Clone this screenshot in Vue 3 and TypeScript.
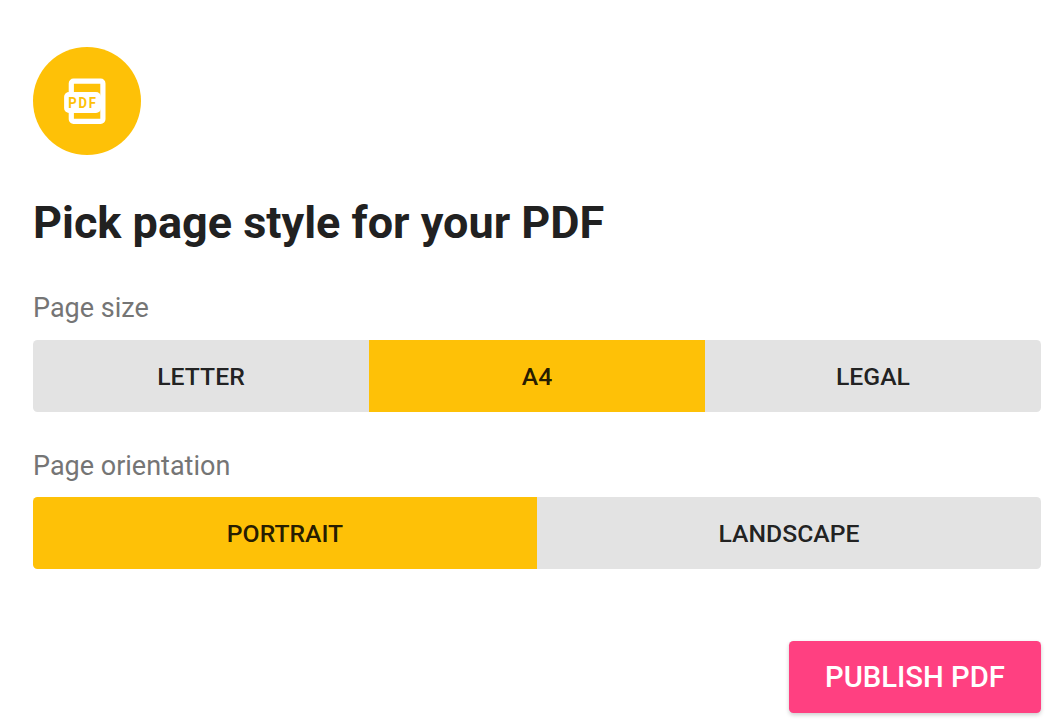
<script setup lang="ts">
import { ref } from 'vue'

type PageSize = 'Letter' | 'A4' | 'Legal'
type Orientation = 'Portrait' | 'Landscape'

const sizes: PageSize[] = ['Letter', 'A4', 'Legal']
const orientations: Orientation[] = ['Portrait', 'Landscape']

const size = ref<PageSize>('A4')
const orientation = ref<Orientation>('Portrait')
</script>

<template>
  <main class="dialog">
    <div class="badge">
      <svg class="badge__icon" viewBox="0 0 54 54" aria-hidden="true">
        <rect x="11.3" y="7.2" width="31.6" height="40.2" rx="2.2" fill="none" stroke="#fff" stroke-width="5.2" />
        <rect x="4.1" y="18" width="36.9" height="21" rx="5" fill="#fff" />
        <text class="badge__text" transform="translate(8.3 34) scale(0.86 1)">PDF</text>
      </svg>
    </div>

    <h1 class="title">Pick page style for your PDF</h1>

    <section class="field">
      <h2 class="label">Page size</h2>
      <div class="toggle">
        <button
          v-for="item in sizes"
          :key="item"
          type="button"
          class="toggle__item"
          :class="{ 'toggle__item--active': item === size }"
          :aria-pressed="item === size"
          @click="size = item"
        >
          {{ item }}
        </button>
      </div>
    </section>

    <section class="field">
      <h2 class="label">Page orientation</h2>
      <div class="toggle">
        <button
          v-for="item in orientations"
          :key="item"
          type="button"
          class="toggle__item"
          :class="{ 'toggle__item--active': item === orientation }"
          :aria-pressed="item === orientation"
          @click="orientation = item"
        >
          {{ item }}
        </button>
      </div>
    </section>

    <footer class="actions">
      <button type="button" class="publish">Publish PDF</button>
    </footer>
  </main>
</template>

<style>
body {
  background: #fff;
}
</style>

<style scoped>
.dialog {
  box-sizing: border-box;
  height: 728px;
  overflow: hidden;
  padding: 47px 21px 0 33px;
  font-family: Roboto, sans-serif;
  color: #212121;
}

.badge {
  display: flex;
  align-items: center;
  justify-content: center;
  width: 108px;
  height: 108px;
  border-radius: 50%;
  background: #fec107;
}

.badge__icon {
  width: 54px;
  height: 54px;
}

.badge__text {
  fill: #fec107;
  font-size: 15.2px;
  font-weight: 700;
  letter-spacing: 2px;
}

.title {
  margin: 41px 0 0;
  font-size: 45px;
  font-weight: 700;
  line-height: 54px;
}

.field {
  margin-top: 42px;
}

.field + .field {
  margin-top: 38px;
}

.label {
  margin: 0 0 16px;
  font-size: 27px;
  font-weight: 400;
  line-height: 32px;
  color: #757575;
}

.field + .field .label {
  margin-bottom: 15px;
}

.toggle {
  display: flex;
  height: 72px;
  border-radius: 4.5px;
  overflow: hidden;
}

.toggle__item {
  flex: 1;
  padding: 2px 0 0;
  border: 0;
  background: #e3e3e3;
  color: rgb(0 0 0 / 0.87);
  font: 500 24.75px/70px Roboto, sans-serif;
  text-transform: uppercase;
  cursor: pointer;
}

.toggle__item--active {
  background: #fec107;
}

.actions {
  display: flex;
  justify-content: flex-end;
  margin-top: 72px;
}

.publish {
  width: 252px;
  height: 72px;
  padding: 0;
  border: 0;
  border-radius: 4.5px;
  background: #ff4081;
  box-shadow: 0 2px 4px rgb(0 0 0 / 0.2);
  color: #fff;
  font: 500 29.25px/72px Roboto, sans-serif;
  text-transform: uppercase;
  cursor: pointer;
}
</style>
